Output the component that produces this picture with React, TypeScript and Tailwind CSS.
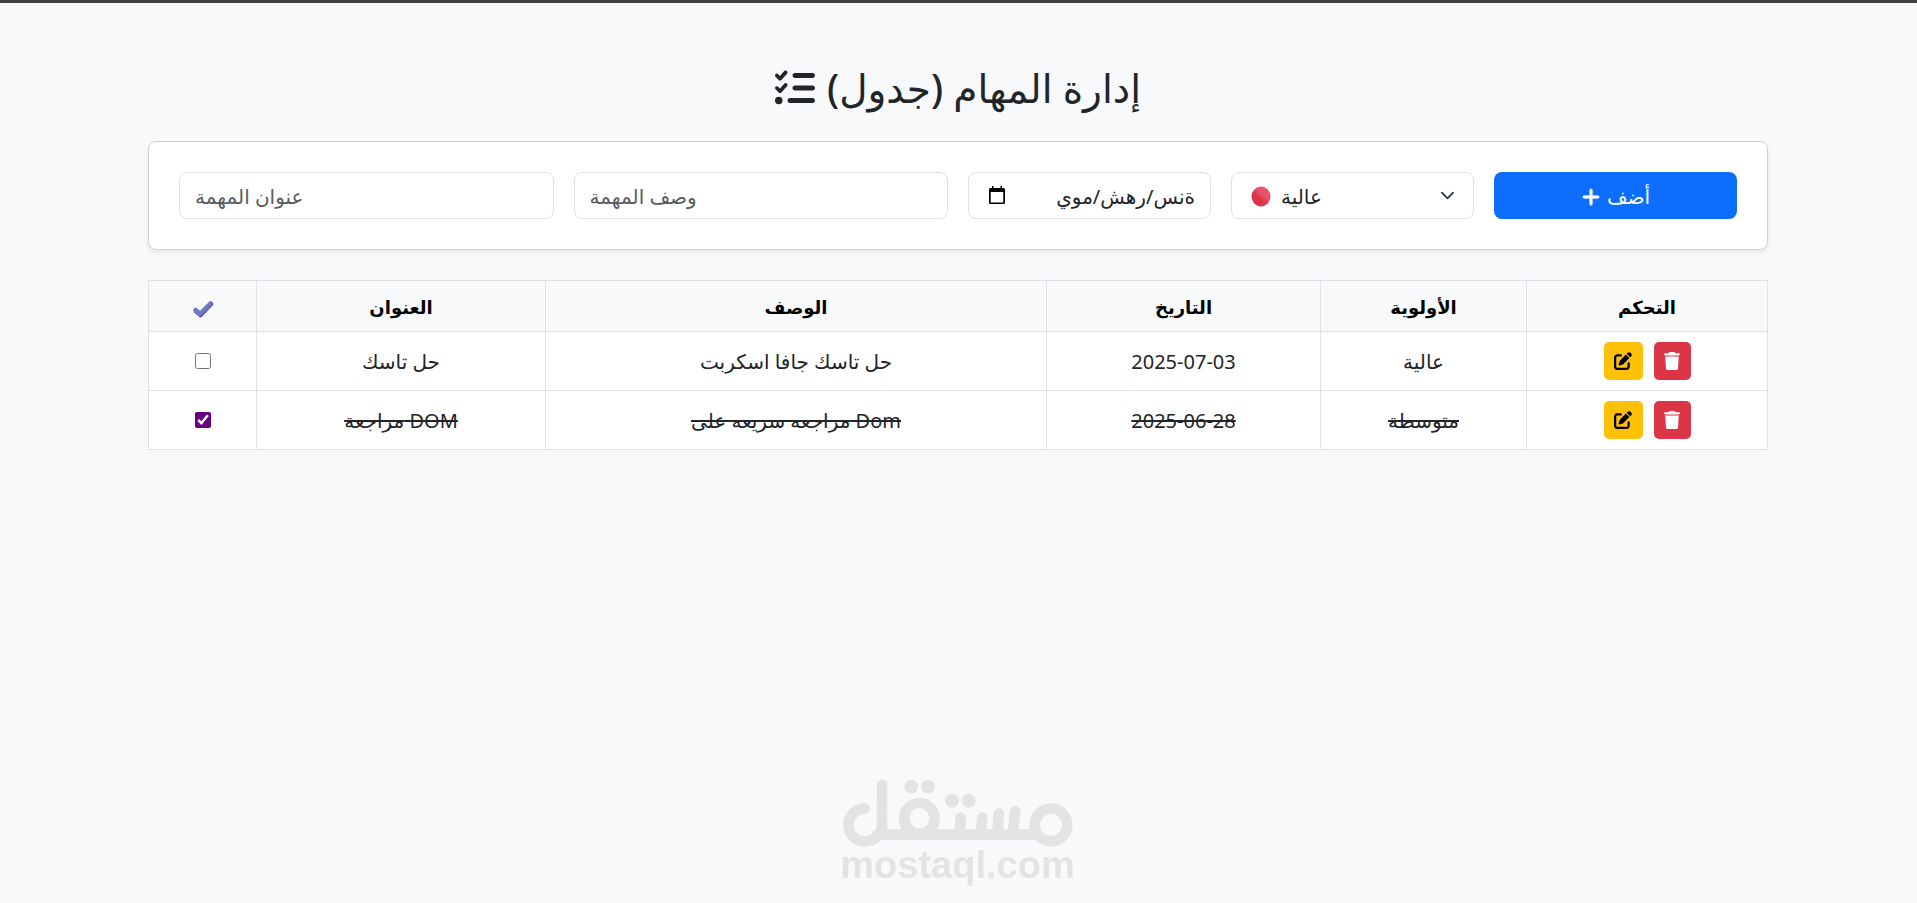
import React, { useState } from 'react';
import { FaListCheck, FaPlus, FaPenToSquare, FaTrash } from 'react-icons/fa6';

const INITIAL_TASKS = [
  { id: 1, title: 'حل تاسك', desc: 'حل تاسك جافا اسكربت', date: '2025-07-03', priority: 'عالية', done: false },
  { id: 2, title: 'مراجعة DOM', desc: 'مراجعه سريعه على Dom', date: '2025-06-28', priority: 'متوسطة', done: true },
];

const HEADERS = ['العنوان', 'الوصف', 'التاريخ', 'الأولوية', 'التحكم'];

const fieldClass = 'w-full h-[47px] px-[15px] pt-0.5 rounded-lg border border-[#dee2e6] bg-white text-[#212529] placeholder:text-[#595c5f] outline-none';
const cellClass = 'border border-[#dee2e6] pt-0.5';

function Watermark() {
  return (
    <div className="fixed bottom-0 inset-x-0 flex flex-col items-center pb-5 pr-0.5 text-[#e2e4e4] pointer-events-none">
      <svg className="w-[230px] h-[68px]" viewBox="69 57 690 202" fill="none" stroke="currentColor" strokeWidth="32" strokeLinecap="round">
        <path d="M134 145 A49 49 0 0 0 134 243 A52 49 0 0 0 186 194 V73" />
        <path d="M172 223 H650" />
        <circle cx="298" cy="174" r="46" />
        <circle cx="693" cy="194" r="49" />
        <path d="M422 172 L419 215 M487 172 L482 215 M537 160 L532 215 M586 153 L579 215" />
        <g fill="currentColor" stroke="none">
          <circle cx="274" cy="79" r="21" />
          <circle cx="324" cy="79" r="21" />
          <circle cx="396" cy="121" r="21" />
          <circle cx="446" cy="121" r="21" />
        </g>
      </svg>
      <span className="font-['Liberation_Sans'] font-bold text-[38px] leading-9">mostaql.com</span>
    </div>
  );
}

export default function App() {
  const [tasks, setTasks] = useState(INITIAL_TASKS);

  const toggle = (id: number) =>
    setTasks(tasks.map((t) => (t.id === id ? { ...t, done: !t.done } : t)));
  const remove = (id: number) => setTasks(tasks.filter((t) => t.id !== id));

  return (
    <div className="min-h-screen pr-px bg-[#f8f9fa] border-t-[3px] border-[#424242] font-['Noto_Sans','DejaVu_Sans',sans-serif] text-xl text-[#212529]">
      <div className="max-w-[1650px] mx-auto px-[15px] pt-[61px]">
        <h1 dir="rtl" className="flex justify-center items-center gap-3 h-12 mb-[29px] text-[39px] font-medium">
          إدارة المهام (جدول)
          <FaListCheck size={40} />
        </h1>

        <form onSubmit={(e) => e.preventDefault()} className="grid grid-cols-12 gap-5 p-[30px] mb-[30px] bg-white rounded-lg border border-[#d0d1d2] shadow-[0_3px_5px_rgba(0,0,0,0.075)]">
          <input aria-label="عنوان المهمة" placeholder="عنوان المهمة" className={`${fieldClass} col-span-3`} />
          <input aria-label="وصف المهمة" placeholder="وصف المهمة" className={`${fieldClass} col-span-3`} />
          <div className="relative col-span-2">
            <input aria-label="التاريخ" dir="rtl" defaultValue="ةنس/رهش/موي" className={fieldClass} />
            <button type="button" aria-label="التقويم" className="absolute left-5 top-3.5">
              <svg width="18" height="20" viewBox="0 0 18 20">
                <path d="M4 0 H5.500 V2 H12.500 V0 H14 V2 H15.500 Q17 2 17 3.500 V16.500 Q17 18 15.500 18 H2.500 Q1 18 1 16.500 V3.500 Q1 2 2.500 2 H4 Z M2.700 6 V16.400 H15.300 V6 Z" fillRule="evenodd" />
              </svg>
            </button>
          </div>
          <div className="relative col-span-2">
            <select aria-label="الأولوية" className={`${fieldClass} appearance-none pl-[49px]`}>
              <option>عالية</option>
              <option>متوسطة</option>
              <option>منخفضة</option>
            </select>
            <svg className="absolute left-5 top-3.5 pointer-events-none" width="20" height="21" viewBox="0 0 20 21">
              <defs>
                <linearGradient id="priorityDot" x1="0.8" y1="0.1" x2="0.25" y2="0.8">
                  <stop offset="0.4" stopColor="#e9546b" />
                  <stop offset="0.7" stopColor="#dc3545" />
                </linearGradient>
              </defs>
              <ellipse cx="10" cy="10.500" rx="9.500" ry="10" fill="url(#priorityDot)" />
            </svg>
            <svg className="absolute right-[19px] top-4 pointer-events-none" width="15" height="15" viewBox="0 0 16 16" fill="none" stroke="#343a40" strokeWidth="2" strokeLinecap="round" strokeLinejoin="round">
              <path d="m2 5 6 6 6-6" />
            </svg>
          </div>
          <button dir="rtl" className="col-span-2 h-[47px] flex justify-center items-center gap-1.5 pt-0.5 rounded-lg bg-[#0d6efd] text-white">
            أضف
            <FaPlus size={20} stroke="currentColor" strokeWidth={16} />
          </button>
        </form>

        <table className="w-full table-fixed border-collapse text-center">
          <colgroup>
            <col className="w-[108px]" />
            <col className="w-[289px]" />
            <col />
            <col className="w-[274px]" />
            <col className="w-[206px]" />
            <col className="w-[241px]" />
          </colgroup>
          <thead>
            <tr className="h-[51px] text-black">
              <th className="border border-[#dee2e6] pt-1.5">
                <svg className="mx-auto" width="22" height="18" viewBox="0 0 22 18" fill="none" strokeLinecap="round" strokeLinejoin="round" strokeWidth="4.500">
                  <path d="M4 11 L8.500 15 L19 4" stroke="#5a3a8c" />
                  <path d="M3.500 10 L8 14 L18.500 3.500" stroke="#6d79c4" />
                </svg>
              </th>
              {HEADERS.map((h) => (
                <th key={h} className={`${cellClass} text-lg font-bold`}>{h}</th>
              ))}
            </tr>
          </thead>
          <tbody>
            {tasks.map((task) => (
              <tr key={task.id} className={`h-[59px] bg-white ${task.done ? 'line-through' : ''}`}>
                <td className="border border-[#dee2e6]">
                  <input type="checkbox" aria-label={task.title} checked={task.done} onChange={() => toggle(task.id)} className="block mx-auto size-4 accent-[#6a0080]" />
                </td>
                <td className={cellClass}>{task.title}</td>
                <td className={cellClass}>{task.desc}</td>
                <td className={cellClass}>{task.date}</td>
                <td className={cellClass}>{task.priority}</td>
                <td className="border border-[#dee2e6]">
                  <div className="flex justify-center gap-[11px]">
                    <button aria-label="تعديل" className="flex justify-center items-center w-[39px] h-[38px] rounded-[5px] bg-[#ffc107] text-black">
                      <FaPenToSquare size={18} />
                    </button>
                    <button aria-label="حذف" onClick={() => remove(task.id)} className="flex justify-center items-center w-[37px] h-[38px] rounded-[5px] bg-[#dc3545] text-white">
                      <FaTrash size={18} />
                    </button>
                  </div>
                </td>
              </tr>
            ))}
          </tbody>
        </table>
      </div>
      <Watermark />
    </div>
  );
}
